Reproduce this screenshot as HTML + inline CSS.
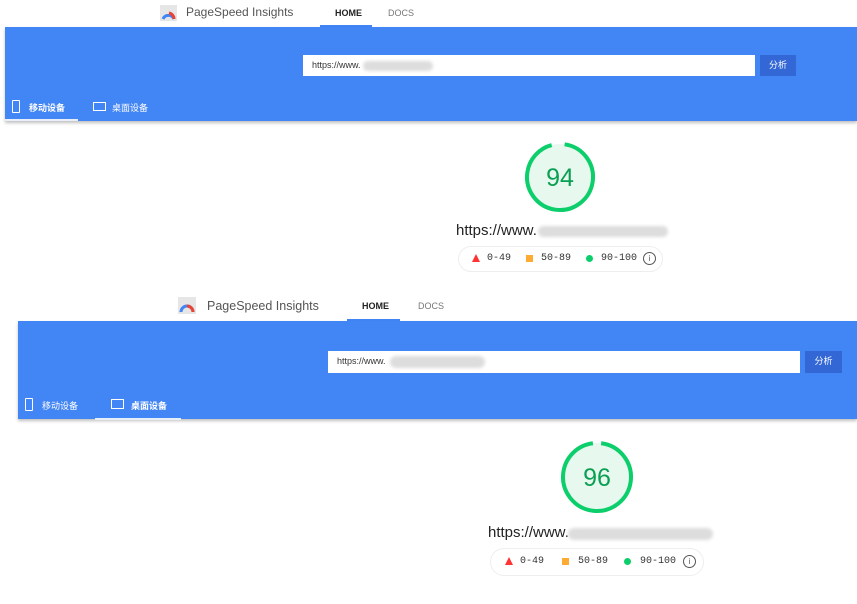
<!DOCTYPE html>
<html><head><meta charset="utf-8"><style>
body{margin:0;width:857px;height:604px;background:#fff;position:relative;overflow:hidden;font-family:"Liberation Sans","Noto Sans CJK SC",sans-serif}
.a{position:absolute}
.blue{background:#4285f4;box-shadow:0 2px 3px rgba(0,0,0,.25)}
.inp{background:#fff;font-size:9px;color:#333;line-height:21px;padding-left:9px;box-sizing:border-box}
.btn{background:#3367d6;color:#fff;font-size:9px;text-align:center;line-height:21px}
.tab{color:#fff;font-size:9px;font-weight:bold}
.nav{font-size:9px;font-weight:bold;color:#222}
.docs{font-size:9px;color:#777}
.blur{background:#ddd;border-radius:6px;filter:blur(1.5px)}
.pill{border:1px solid #eee;border-radius:14px;font-family:"Liberation Mono",monospace;font-size:10px;color:#333}
</style></head><body>
<!-- Section 1 -->
<svg class="a" style="left:160px;top:5px" width="17" height="16"><rect width="17" height="16" fill="#e6e6e6"/><path d="M3 14 A6 6 0 0 1 14 14" stroke="#4285f4" stroke-width="3" fill="none"/><path d="M9 8 A6 6 0 0 1 14 14" stroke="#ea4335" stroke-width="3" fill="none"/></svg>
<div class="a" style="left:186px;top:5px;font-size:12px;color:#555">PageSpeed Insights</div>
<div class="a nav" style="left:335px;top:8px">HOME</div>
<div class="a docs" style="left:388px;top:8px">DOCS</div>
<div class="a" style="left:320px;top:25px;width:52px;height:2px;background:#4285f4"></div>
<div class="a blue" style="left:5px;top:27px;width:852px;height:94px"></div>
<div class="a inp" style="left:303px;top:55px;width:452px;height:21px">https://www.</div>
<div class="a blur" style="left:363px;top:61px;width:70px;height:10px"></div>
<div class="a btn" style="left:760px;top:55px;width:36px;height:21px">分析</div>
<div class="a" style="left:12px;top:100px;width:6px;height:11px;border:1.5px solid #fff;border-radius:1px"></div>
<div class="a tab" style="left:29px;top:101px">移动设备</div>
<div class="a" style="left:93px;top:102px;width:11px;height:7px;border:1.5px solid #fff"></div>
<div class="a tab" style="left:112px;top:101px;font-weight:normal">桌面设备</div>
<div class="a" style="left:5px;top:119px;width:73px;height:2px;background:#e8eef8"></div>
<svg class="a" style="left:522px;top:139px" width="76" height="76"><circle cx="38" cy="38" r="33" fill="#e7f8ee" stroke="#0cce6b" stroke-width="4" stroke-dasharray="194 13.3" transform="rotate(-82 38 38)"/><text x="38" y="47" text-anchor="middle" font-size="25" fill="#0a9f52" font-family="Liberation Sans">94</text></svg>
<div class="a" style="left:456px;top:222px;font-size:15px;color:#222">https://www.</div>
<div class="a blur" style="left:538px;top:226px;width:130px;height:11px"></div>
<div class="a pill" style="left:458px;top:246px;width:203px;height:24px"></div>
<div class="a" style="left:472px;top:254px;width:0;height:0;border-left:4px solid transparent;border-right:4px solid transparent;border-bottom:8px solid #f33"></div>
<div class="a pill" style="left:487px;top:253px;border:0">0-49</div>
<div class="a" style="left:526px;top:255px;width:7px;height:7px;background:#fa3"></div>
<div class="a pill" style="left:541px;top:253px;border:0">50-89</div>
<div class="a" style="left:586px;top:255px;width:7px;height:7px;border-radius:50%;background:#0cce6b"></div>
<div class="a pill" style="left:601px;top:253px;border:0">90-100</div>
<div class="a" style="left:643px;top:252px;width:11px;height:11px;border:1px solid #555;border-radius:50%;font-size:8px;text-align:center;line-height:11px;color:#555">i</div>
<!-- Section 2 -->
<svg class="a" style="left:178px;top:297px" width="18" height="17"><rect width="18" height="17" fill="#e6e6e6"/><path d="M3 15 A6 6 0 0 1 15 15" stroke="#4285f4" stroke-width="3" fill="none"/><path d="M9 9 A6 6 0 0 1 15 15" stroke="#ea4335" stroke-width="3" fill="none"/></svg>
<div class="a" style="left:207px;top:299px;font-size:12.5px;color:#555">PageSpeed Insights</div>
<div class="a nav" style="left:362px;top:301px">HOME</div>
<div class="a docs" style="left:418px;top:301px">DOCS</div>
<div class="a" style="left:347px;top:319px;width:53px;height:2px;background:#4285f4"></div>
<div class="a blue" style="left:18px;top:321px;width:839px;height:98px"></div>
<div class="a inp" style="left:328px;top:351px;width:472px;height:22px">https://www.</div>
<div class="a blur" style="left:390px;top:356px;width:95px;height:12px"></div>
<div class="a btn" style="left:805px;top:351px;width:37px;height:22px">分析</div>
<div class="a" style="left:25px;top:398px;width:6px;height:11px;border:1.5px solid #fff;border-radius:1px"></div>
<div class="a tab" style="left:42px;top:399px;font-weight:normal">移动设备</div>
<div class="a" style="left:111px;top:399px;width:11px;height:8px;border:1.5px solid #fff"></div>
<div class="a tab" style="left:131px;top:399px">桌面设备</div>
<div class="a" style="left:95px;top:418px;width:86px;height:2px;background:#e8eef8"></div>
<svg class="a" style="left:558px;top:438px" width="78" height="78"><circle cx="39" cy="39" r="34" fill="#e7f8ee" stroke="#0cce6b" stroke-width="4" stroke-dasharray="205 8.6" transform="rotate(-83 39 39)"/><text x="39" y="48" text-anchor="middle" font-size="25" fill="#0a9f52" font-family="Liberation Sans">96</text></svg>
<div class="a" style="left:488px;top:524px;font-size:15px;color:#222">https://www.</div>
<div class="a blur" style="left:568px;top:528px;width:145px;height:12px"></div>
<div class="a pill" style="left:490px;top:548px;width:212px;height:26px"></div>
<div class="a" style="left:505px;top:557px;width:0;height:0;border-left:4px solid transparent;border-right:4px solid transparent;border-bottom:8px solid #f33"></div>
<div class="a pill" style="left:520px;top:556px;border:0">0-49</div>
<div class="a" style="left:562px;top:558px;width:7px;height:7px;background:#fa3"></div>
<div class="a pill" style="left:578px;top:556px;border:0">50-89</div>
<div class="a" style="left:624px;top:558px;width:7px;height:7px;border-radius:50%;background:#0cce6b"></div>
<div class="a pill" style="left:640px;top:556px;border:0">90-100</div>
<div class="a" style="left:683px;top:555px;width:11px;height:11px;border:1px solid #555;border-radius:50%;font-size:8px;text-align:center;line-height:11px;color:#555">i</div>
</body></html>
